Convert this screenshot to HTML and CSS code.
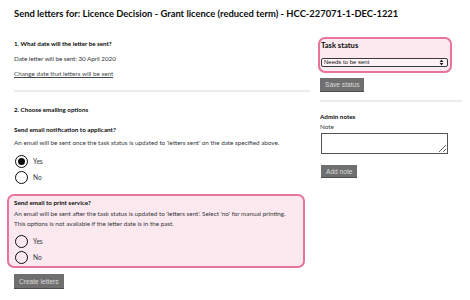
FILE: index.html
```html
<!DOCTYPE html>
<html lang="en">
<head>
<meta charset="utf-8">
<title>Send letters</title>
<link rel="stylesheet" href="styles.css">
</head>
<body>
<div class="page">
  <h1 class="title">Send letters for: Licence Decision - Grant licence (reduced term) - HCC-227071-1-DEC-1221</h1>
  <div class="layout">
    <main class="main">
      <h2 class="section-heading first">1. What date will the letter be sent?</h2>
      <p class="text date-text">Date letter will be sent: 30 April 2020</p>
      <p class="text link-row"><a class="link" href="#">Change date that letters will be sent</a></p>
      <hr class="rule">
      <h2 class="section-heading second">2. Choose emailing options</h2>

      <div class="group" role="radiogroup">
        <p class="question">Send email notification to applicant?</p>
        <p class="text hint">An email will be sent once the task status is updated to 'letters sent' on the date specified above.</p>
        <div class="radios">
          <label class="radio"><span class="circle checked"></span><span class="radio-label">Yes</span></label>
          <label class="radio"><span class="circle"></span><span class="radio-label">No</span></label>
        </div>
      </div>

      <div class="group highlight" role="radiogroup">
        <p class="question">Send email to print service?</p>
        <p class="text hint">An email will be sent after the task status is updated to 'letters sent'. Select 'no' for manual printing.<br>This options is not available if the letter date is in the past.</p>
        <div class="radios">
          <label class="radio"><span class="circle"></span><span class="radio-label">Yes</span></label>
          <label class="radio"><span class="circle"></span><span class="radio-label">No</span></label>
        </div>
      </div>

      <button class="btn create-btn" type="button">Create letters</button>
    </main>

    <aside class="side">
      <div class="status-box">
        <h2 class="status-heading">Task status</h2>
        <div class="select-wrap">
          <select class="select"><option>Needs to be sent</option></select>
          <svg class="select-arrows" width="5" height="7" viewBox="0 0 5 7"><path d="M0.6 3 L2.5 0.6 L4.4 3 Z M0.6 4 L2.5 6.4 L4.4 4 Z" fill="#222"/></svg>
        </div>
      </div>
      <button class="btn save-btn" type="button">Save status</button>
      <hr class="side-rule">
      <h2 class="notes-heading">Admin notes</h2>
      <label class="note-label" for="note">Note</label>
      <textarea class="note" id="note"></textarea>
      <button class="btn note-btn" type="button">Add note</button>
    </aside>
  </div>
</div>
</body>
</html>
```

FILE: styles.css
```css
* { box-sizing: border-box; }

body {
  margin: 0;
  background: #ffffff;
  font-family: Lato, "Noto Sans", sans-serif;
  color: #0b0c0c;
}

.page {
  padding: 8px 8px 0 14px;
}

.title {
  margin: 0;
  font-size: 9.4px;
  line-height: 12px;
  font-weight: 700;
  color: #0b0c0c;
}

.layout {
  display: grid;
  grid-template-columns: 296px 142px;
  column-gap: 10px;
  margin-top: 15px;
}

.main, .side { display: flex; flex-direction: column; align-items: flex-start; }

.section-heading {
  margin: 0;
  font-size: 6.2px;
  line-height: 10px;
  font-weight: 700;
}
.section-heading.first { margin-top: 4px; }
.section-heading.second { margin-top: 13px; }

.text {
  margin: 0;
  font-size: 6.3px;
  line-height: 10px;
  color: #33373b;
}
.date-text { margin-top: 5px; letter-spacing: -0.05px; }
.link-row { margin-top: 5px; }
.link { color: #44494e; text-decoration: underline; text-underline-offset: 1px; }

.rule {
  align-self: stretch;
  margin: 11px 0 0 0;
  border: 0;
  height: 2px;
  background: #ececec;
}

.group {
  margin: 10px 0 0 0;
  padding: 0;
  align-self: stretch;
}

.question {
  margin: 0;
  font-size: 6.3px;
  line-height: 10px;
  font-weight: 700;
  color: #0b0c0c;
}

.hint { margin-top: 3px; }

.radios {
  display: flex;
  flex-direction: column;
  gap: 2px;
  margin-top: 6px;
}

.radio {
  display: flex;
  align-items: center;
  height: 14px;
  gap: 5px;
  font-size: 6.6px;
  color: #33373b;
}

.circle {
  width: 13px;
  height: 13px;
  border: 1.3px solid #0b0c0c;
  border-radius: 50%;
  display: flex;
  align-items: center;
  justify-content: center;
  background: transparent;
  margin-left: 1px;
}
.circle.checked::after {
  content: "";
  width: 7px;
  height: 7px;
  border-radius: 50%;
  background: #0b0c0c;
}

.highlight {
  margin: 10px 0 0 -7px;
  width: 298px;
  align-self: flex-start;
  border: 2px solid #e9739f;
  border-radius: 7px;
  background: #fce9ef;
  padding: 2px 5px 2px 5px;
}
.highlight .hint { margin-top: 1px; }
.highlight .radios { margin-top: 5px; }

.btn {
  font-family: "Liberation Sans", Arial, sans-serif;
  font-size: 6.6px;
  white-space: nowrap;
  color: #dcdcdc;
  background: #6f6f6f;
  border: 0;
  border-bottom: 1px solid #4c4c4c;
  border-radius: 0;
  padding: 0 5px;
  height: 15px;
}
.create-btn { margin-top: 6px; }

.status-box {
  margin: 2px 0 0 -2px;
  width: 134px;
  border: 2px solid #e9739f;
  border-radius: 7px;
  background: #fce9ef;
  padding: 1px 2px 4px 1px;
}

.status-heading {
  margin: 0;
  font-size: 7.6px;
  line-height: 10px;
  font-weight: 700;
}

.select-wrap {
  position: relative;
  margin-top: 8px;
  height: 9px;
}

.select {
  display: block;
  -webkit-appearance: none;
  appearance: none;
  width: 127px;
  height: 9px;
  margin: 0;
  padding: 0 0 0 2px;
  border: 1px solid #3a3a3a;
  border-radius: 2px;
  background: #fdf3f6;
  font-family: "Liberation Sans", Arial, sans-serif;
  font-size: 6px;
  line-height: 7px;
  color: #111;
}

.select-arrows {
  position: absolute;
  right: 4px;
  top: 1px;
}

.save-btn { margin-top: 5px; height: 14px; }

.side-rule {
  align-self: stretch;
  margin: 8px 0 0 0;
  border: 0;
  height: 2px;
  background: #ececec;
}

.notes-heading {
  margin: 10px 0 0 0;
  font-size: 6.3px;
  line-height: 10px;
  font-weight: 700;
}

.note-label {
  font-size: 6.3px;
  line-height: 10px;
  color: #33373b;
}

.note {
  margin-top: 1px;
  margin-left: 1px;
  width: 127px;
  height: 21px;
  border: 1.5px solid #555;
  border-radius: 0;
  background: #fff;
  resize: vertical;
}

.note-btn { margin-top: 11px; margin-left: 1px; height: 13px; }
```
